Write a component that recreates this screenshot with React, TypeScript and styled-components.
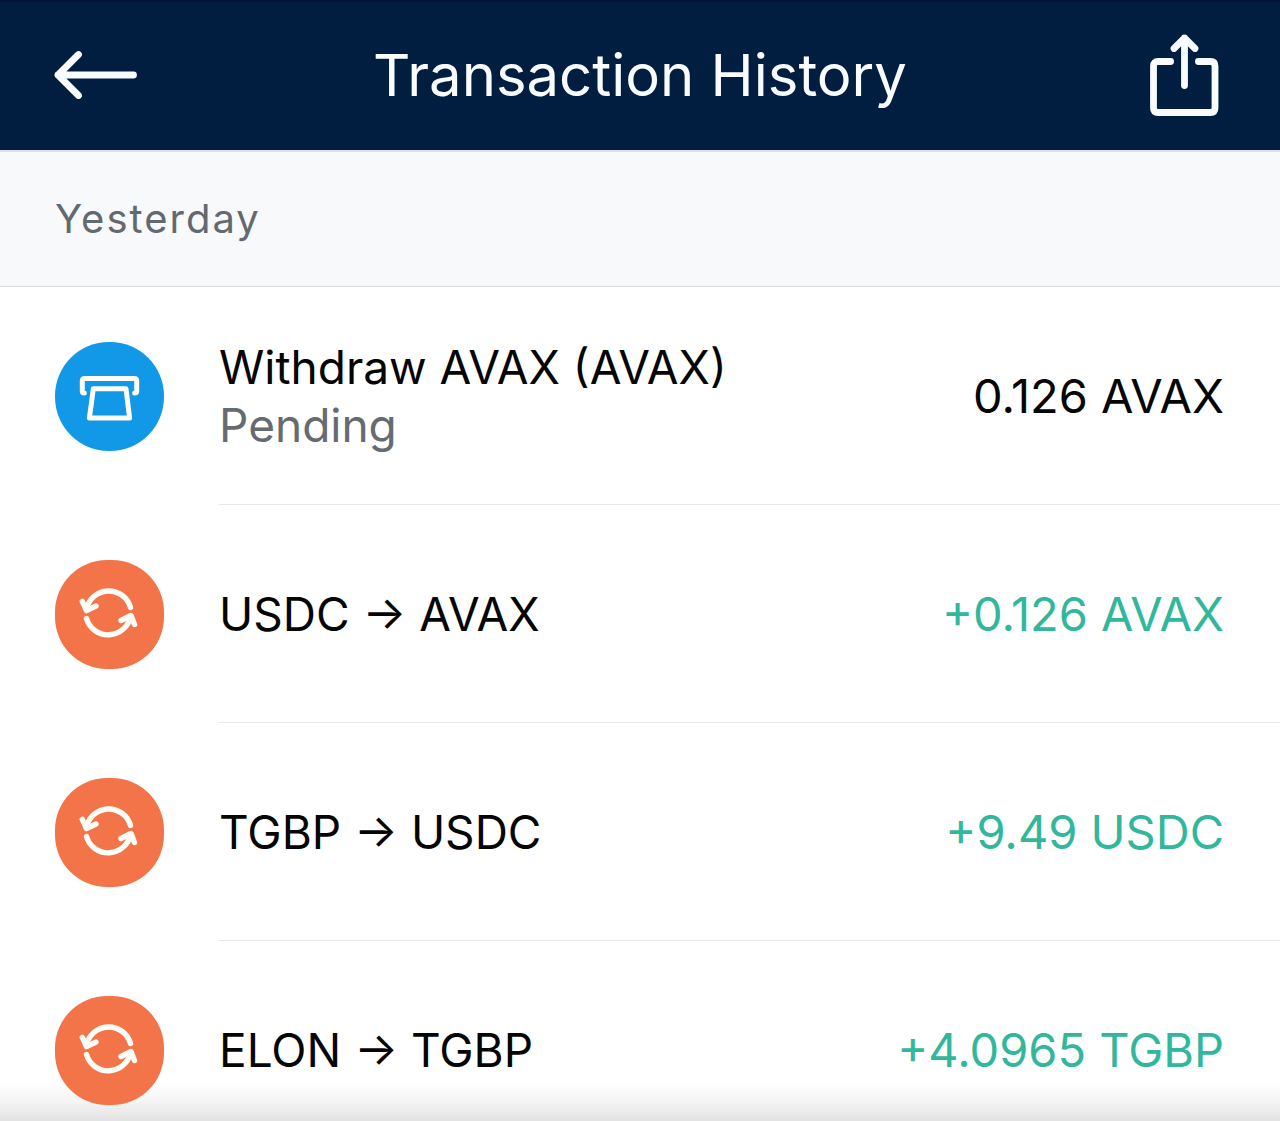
import React from "react";
import styled, { createGlobalStyle } from "styled-components";

const GlobalStyle = createGlobalStyle`
  *, *::before, *::after { box-sizing: border-box; }
  body {
    margin: 0;
    background: #ffffff;
    color: #050506;
    font-family: Inter, Roboto, "Liberation Sans", sans-serif;
  }
`;

const Screen = styled.div`
  display: flex;
  flex-direction: column;
  height: 100vh;
  overflow: hidden;
`;

const Header = styled.header`
  flex: none;
  display: grid;
  grid-template-columns: 1fr auto 1fr;
  align-items: center;
  height: 150px;
  padding: 0 54px;
  background: #011e41;
  box-shadow: inset 0 2px #00123b;
  color: #f8fcff;
`;

const Title = styled.h1`
  margin: 0;
  font-size: 58px;
  line-height: 72px;
  font-weight: 400;
`;

const IconButton = styled.button<{ $align: "start" | "end" }>`
  justify-self: ${({ $align }) => $align};
  display: flex;
  padding: 0;
  border: 0;
  background: none;
  color: inherit;
  cursor: pointer;
`;

const DayHeading = styled.h2`
  flex: none;
  display: flex;
  align-items: center;
  height: 137px;
  margin: 0;
  padding: 0 55px;
  background: #f7f9fb;
  border-top: 2px solid #dcdfe8;
  border-bottom: 1px solid #d8dbde;
  color: #62696f;
  font-size: 40px;
  line-height: 48px;
  font-weight: 400;
  letter-spacing: 2px;
`;

const List = styled.ul`
  flex: 1;
  min-height: 0;
  margin: 0;
  padding: 0;
  overflow-y: auto;
  scrollbar-width: none;
  list-style: none;
  background: linear-gradient(#ffffff, #f5f5f5 50%, #e2e2e2) bottom / 100% 40px no-repeat;
`;

const Row = styled.li`
  display: flex;
  align-items: stretch;
  gap: 55px;
  padding-left: 55px;
`;

const Badge = styled.span<{ $color: string; $radius: number }>`
  flex: none;
  align-self: center;
  display: flex;
  width: 109px;
  height: 109px;
  border-radius: ${({ $radius }) => $radius}px;
  background: ${({ $color }) => $color};
  color: #fffdf8;
`;

const RowBody = styled.div`
  flex: 1;
  display: flex;
  align-items: center;
  justify-content: space-between;
  gap: 24px;
  min-height: 218px;
  padding-right: 56px;
  border-bottom: 1px solid #e6e8ea;
  font-size: 46px;
  line-height: 58px;
`;

const Name = styled.div``;

const Status = styled.div`
  color: #666b72;
`;

const Amount = styled.div<{ $credit: boolean }>`
  white-space: nowrap;
  font-size: 47px;
  color: ${({ $credit }) => ($credit ? "#31b79c" : "inherit")};
`;

const BackIcon = () => (
  <svg width="83" height="50" viewBox="0 0 83 50" fill="none" stroke="currentColor" strokeWidth="6.8" strokeLinecap="round" strokeLinejoin="round" aria-hidden="true">
    <path d="M24.5 4.5 4 25 24.5 45.5M4 25H79.5" />
  </svg>
);

const ShareIcon = () => (
  <svg width="80" height="84" viewBox="0 0 80 84" fill="none" stroke="currentColor" strokeWidth="6.8" strokeLinecap="round" strokeLinejoin="round" aria-hidden="true">
    <path d="M24.6 28.5H12Q7.5 28.5 7.5 33V75Q7.5 79.5 12 79.5H64.5Q69 79.5 69 75V33Q69 28.5 64.5 28.5H52.4" />
    <path d="M38.5 52.5V5M28 15.5 38.5 5 49 15.5" />
  </svg>
);

const WithdrawIcon = () => (
  <svg viewBox="0 0 109 109" fill="none" stroke="currentColor" strokeWidth="5" strokeLinecap="round" strokeLinejoin="round" aria-hidden="true">
    <path d="M29.3 51Q27.3 51 27.3 49V39Q27.3 36.6 29.7 36.6H79.3Q81.7 36.6 81.7 39V49Q81.7 51 79.7 51" />
    <path d="M38.3 46.8H71L74.6 76H34.4Z" />
  </svg>
);

const SwapIcon = () => (
  <svg viewBox="0 0 109 109" fill="none" stroke="currentColor" strokeWidth="5.4" strokeLinecap="round" strokeLinejoin="round" aria-hidden="true">
    <path d="M75.5 47.5A22.6 22.6 0 0 0 31.5 49.5" />
    <path d="M27.3 41.4 31.5 50.6 41 46" />
    <path d="M31.5 58.5A22.6 22.6 0 0 0 75.5 56" />
    <path d="M66 60.5 76 55.5 79.5 64.5" />
  </svg>
);

type Transaction = {
  kind: "withdraw" | "swap";
  name: string;
  status?: string;
  amount: string;
};

const badges = {
  withdraw: { color: "#1199e8", radius: 54, Icon: WithdrawIcon },
  swap: { color: "#f4744a", radius: 52, Icon: SwapIcon },
};

const transactions: Transaction[] = [
  { kind: "withdraw", name: "Withdraw AVAX (AVAX)", status: "Pending", amount: "0.126 AVAX" },
  { kind: "swap", name: "USDC → AVAX", amount: "+0.126 AVAX" },
  { kind: "swap", name: "TGBP → USDC", amount: "+9.49 USDC" },
  { kind: "swap", name: "ELON → TGBP", amount: "+4.0965 TGBP" },
];

export default function App() {
  return (
    <>
      <GlobalStyle />
      <Screen>
        <Header>
          <IconButton type="button" $align="start" aria-label="Back">
            <BackIcon />
          </IconButton>
          <Title>Transaction History</Title>
          <IconButton type="button" $align="end" aria-label="Share">
            <ShareIcon />
          </IconButton>
        </Header>
        <DayHeading>Yesterday</DayHeading>
        <List>
          {transactions.map((item) => {
            const { color, radius, Icon } = badges[item.kind];
            return (
              <Row key={item.name}>
                <Badge $color={color} $radius={radius}>
                  <Icon />
                </Badge>
                <RowBody>
                  <div>
                    <Name>{item.name}</Name>
                    {item.status && <Status>{item.status}</Status>}
                  </div>
                  <Amount $credit={item.amount.startsWith("+")}>{item.amount}</Amount>
                </RowBody>
              </Row>
            );
          })}
        </List>
      </Screen>
    </>
  );
}
